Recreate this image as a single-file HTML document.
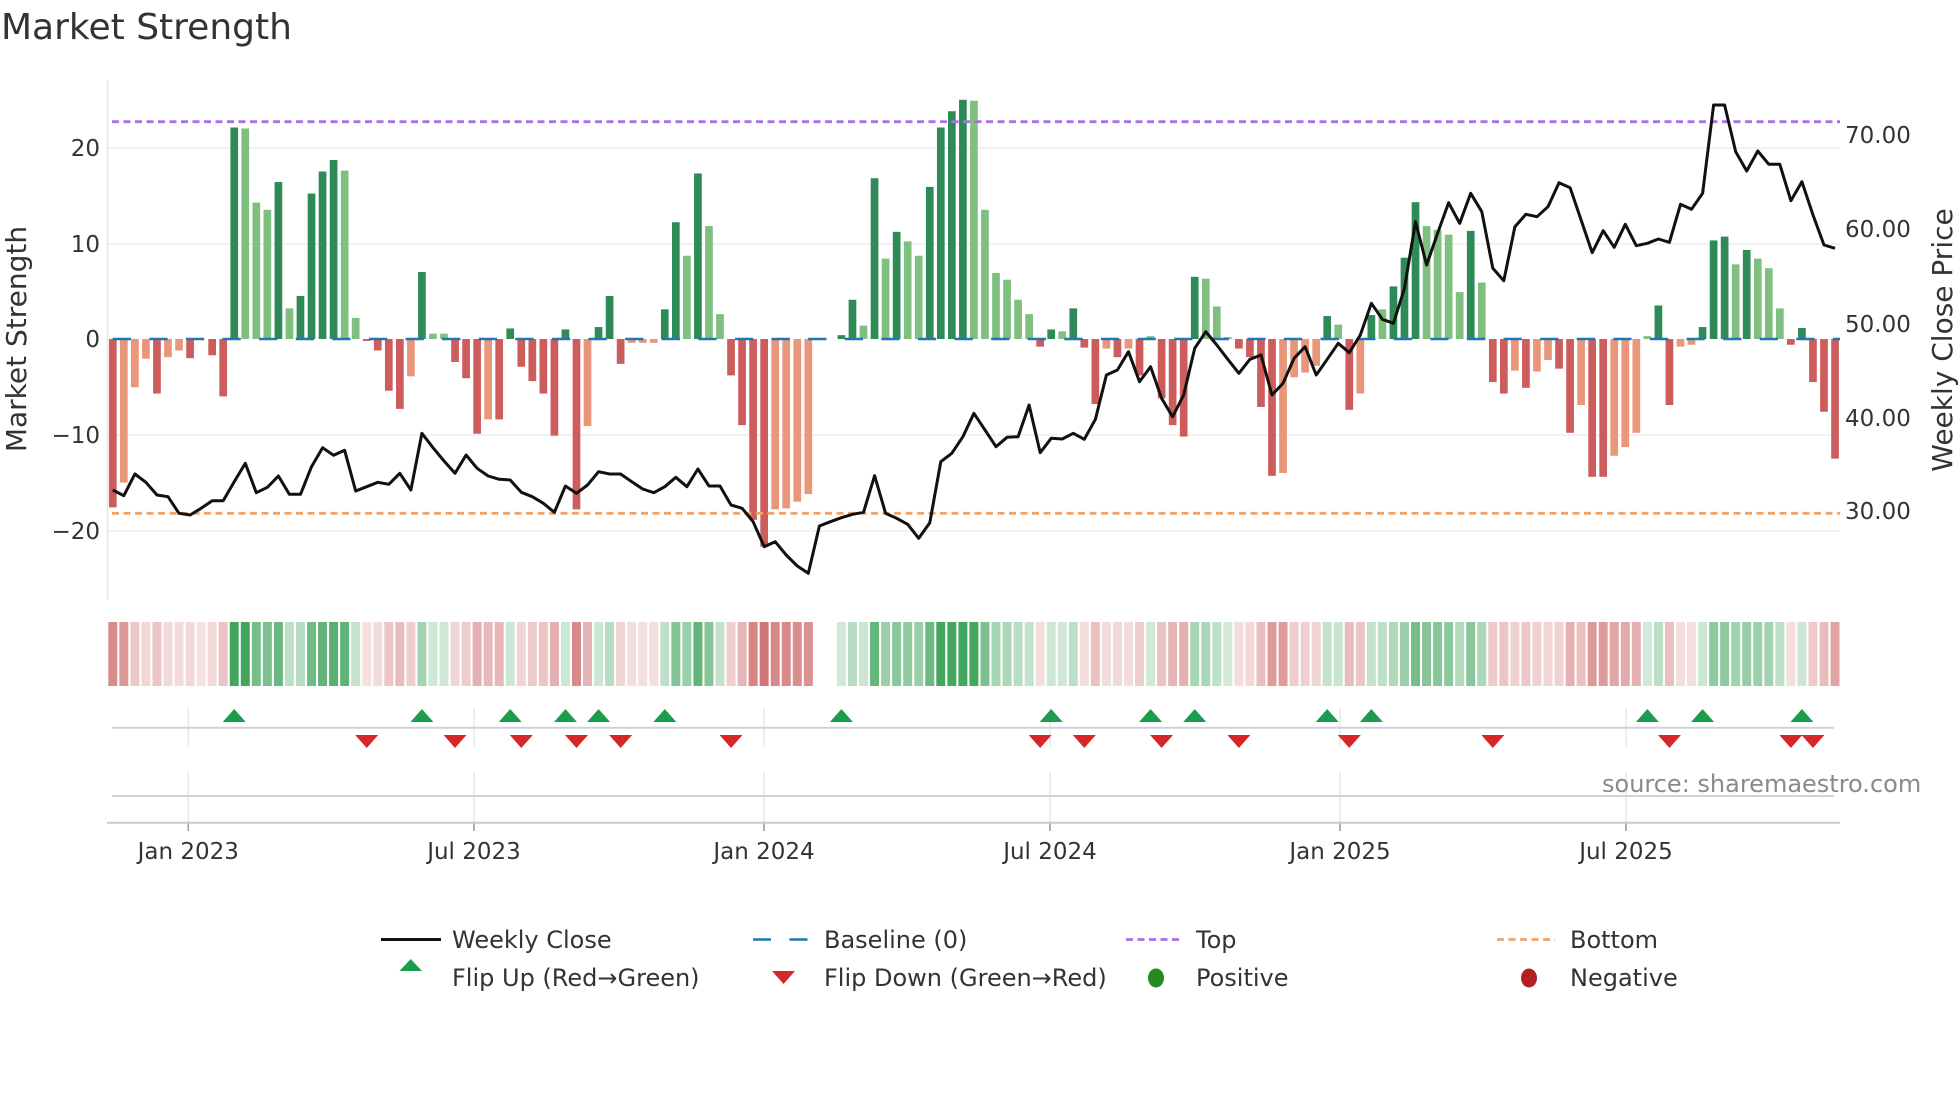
<!DOCTYPE html>
<html><head><meta charset="utf-8">
<style>
html,body{margin:0;padding:0;background:#fff;}
svg{display:block;font-family:"DejaVu Sans","Liberation Sans",sans-serif;}
</style></head>
<body>
<svg id="c" width="1960" height="1102" viewBox="0 0 1960 1102" xmlns="http://www.w3.org/2000/svg">
<rect width="1960" height="1102" fill="#fff"/>
<text x="1" y="39" font-size="36" fill="#333">Market Strength</text>
<g stroke="#eceef2" stroke-width="1.5">
<line x1="107" y1="148" x2="1840" y2="148"/>
<line x1="107" y1="244" x2="1840" y2="244"/>
<line x1="107" y1="435" x2="1840" y2="435"/>
<line x1="107" y1="531" x2="1840" y2="531"/>
</g>
<line x1="107.5" y1="80" x2="107.5" y2="600" stroke="#e6e6ea" stroke-width="1.5"/>
<g font-size="23" fill="#333" text-anchor="end">
<text x="100" y="156">20</text>
<text x="100" y="252">10</text>
<text x="100" y="347">0</text>
<text x="100" y="443">−10</text>
<text x="100" y="539">−20</text>
</g>
<g font-size="23" fill="#333">
<text x="1845" y="143">70.00</text>
<text x="1845" y="237">60.00</text>
<text x="1845" y="332">50.00</text>
<text x="1845" y="426">40.00</text>
<text x="1845" y="519">30.00</text>
</g>
<text transform="translate(26,339) rotate(-90)" font-size="28" fill="#333" text-anchor="middle">Market Strength</text>
<text transform="translate(1952,340) rotate(-90)" font-size="28" fill="#333" text-anchor="middle">Weekly Close Price</text>
<g id="bars"></g>
<line x1="112.7" y1="339" x2="1840" y2="339" stroke="#1f77b4" stroke-width="2.6" stroke-dasharray="18.3 18.3"/>
<line x1="112" y1="121.7" x2="1840" y2="121.7" stroke="#a970e8" stroke-width="2.8" stroke-dasharray="7 4.5"/>
<line x1="112" y1="513.3" x2="1840" y2="513.3" stroke="#f0a46a" stroke-width="2.8" stroke-dasharray="7 4.5"/>
<polyline id="price" fill="none" stroke="#111" stroke-width="3" stroke-linejoin="round"/>
<g id="heat"></g>
<g id="vgrid" stroke="#e5e7eb" stroke-width="1.5"></g>
<line x1="112" y1="727.7" x2="1834" y2="727.7" stroke="#cfd2d8" stroke-width="2"/>
<line x1="112" y1="796" x2="1834" y2="796" stroke="#cfd2d8" stroke-width="2"/>
<line x1="107" y1="822.7" x2="1840" y2="822.7" stroke="#c8c9ce" stroke-width="2"/>
<g id="flips"></g>
<text x="1602" y="792" font-size="24" fill="#8a8a8a">source: sharemaestro.com</text>
<g id="xt" font-size="23" fill="#333" text-anchor="middle"></g>
<g font-size="24" fill="#333">
<line x1="381" y1="939.5" x2="441" y2="939.5" stroke="#111" stroke-width="3"/>
<text x="452" y="948">Weekly Close</text>
<line x1="753" y1="939.5" x2="810" y2="939.5" stroke="#1f77b4" stroke-width="2.6" stroke-dasharray="18 18.5"/>
<text x="824" y="948">Baseline (0)</text>
<line x1="1126" y1="939.5" x2="1182" y2="939.5" stroke="#a970e8" stroke-width="2.8" stroke-dasharray="7 4.5"/>
<text x="1196" y="948">Top</text>
<line x1="1497" y1="939.5" x2="1555" y2="939.5" stroke="#f0a46a" stroke-width="2.8" stroke-dasharray="7 4.5"/>
<text x="1570" y="948">Bottom</text>
<polygon points="399.5,971 422,971 410.7,959" fill="#1b9e4b"/>
<text x="452" y="986">Flip Up (Red→Green)</text>
<polygon points="772,971 795,971 783.5,984" fill="#d62728"/>
<text x="824" y="986">Flip Down (Green→Red)</text>
<ellipse cx="1156" cy="978" rx="8" ry="9.5" fill="#228b22"/>
<text x="1196" y="986">Positive</text>
<ellipse cx="1529" cy="978" rx="8" ry="9.5" fill="#b22222"/>
<text x="1570" y="986">Negative</text>
</g>
</svg>
<script>
(function(){
var NS="http://www.w3.org/2000/svg";
function X(i){return 112.8+11.04*i;}
function el(t,a,p){var e=document.createElementNS(NS,t);for(var k in a)e.setAttribute(k,a[k]);p.appendChild(e);return e;}
var D="-17.6r,-15s,-5.05s,-2.05s,-5.7r,-1.9s,-1.2s,-2r,0n,-1.7r,-6r,22.1d,22l,14.25l,13.5l,16.4d,3.2l,4.5d,15.2d,17.5d,18.7d,17.6l,2.2l,-0.2r,-1.2r,-5.4r,-7.3r,-3.9s,7d,0.56l,0.56l,-2.4r,-4.1r,-9.9r,-8.4s,-8.4r,1.1d,-2.9r,-4.4r,-5.7r,-10.1r,1d,-17.8r,-9.1s,1.25d,4.5d,-2.6r,-0.4s,-0.4s,-0.4s,3.1d,12.2d,8.7l,17.3d,11.8l,2.6l,-3.8r,-9r,-18.9r,-21.7r,-17.8s,-17.7s,-17s,-16.2s,0x,0x,0.4d,4.1d,1.4l,16.8d,8.4l,11.2d,10.2l,8.7l,15.9d,22.1d,23.8d,25d,24.9l,13.5l,6.9l,6.2l,4.1l,2.6l,-0.8r,1d,0.8l,3.2d,-0.9r,-6.8r,-1s,-1.9r,-1s,-3.8r,0.3l,-6.2r,-9r,-10.2r,6.5d,6.3l,3.4l,0.2l,-1r,-1.9r,-7.1r,-14.3r,-14s,-4s,-3.5s,-2.8s,2.4d,1.5l,-7.4r,-5.7s,2.5d,3.1l,5.5d,8.5d,14.3d,11.8l,11.4l,10.9l,4.9l,11.3d,5.9l,-4.5r,-5.7r,-3.3s,-5.1r,-3.4s,-2.2s,-3.1r,-9.8r,-6.9s,-14.4r,-14.4r,-12.2s,-11.3s,-9.8s,0.3l,3.5d,-6.9r,-0.8s,-0.6s,1.25d,10.3d,10.7d,7.8l,9.3d,8.4l,7.4l,3.2l,-0.6r,1.15d,-4.5r,-7.6r,-12.5r".split(",");
var col={d:"#2e8b57",l:"#7fbf7f",r:"#cd5c5c",s:"#e9967a"};
var bars=document.getElementById("bars"),heat=document.getElementById("heat");
for(var i=0;i<D.length;i++){
 var s=D[i],t=s.slice(-1),v=parseFloat(s);
 var x=X(i);
 if(t!="n"&&t!="x"&&v!==0){
  var h=Math.abs(v)*9.57;if(h<1.5)h=1.5;
  el("rect",{x:(x-3.85).toFixed(2),y:(v>0?339-h:339).toFixed(2),width:7.7,height:h.toFixed(2),fill:col[t]},bars);
 }
 if(t=="x")continue;
 var c;
 if(v>0){var tt=0.22+0.72*Math.min(1,Math.abs(v)/22);c=[255-tt*(255-55),255-tt*(255-160),255-tt*(255-85)];}
 else{var tt=0.2+0.72*Math.min(1,Math.abs(v)/22);c=[255-tt*(255-205),255-tt*(255-105),255-tt*(255-105)];}
 el("rect",{x:(x-4.5).toFixed(2),y:622,width:9,height:64,fill:"rgb("+c.map(Math.round).join(",")+")"},heat);
}
var Z=[1230,1247,1182,1207,1245,1250,1300,1305,1285,1262,1262,1205,1150,1238,1222,1188,1243,1243,1160,1103,1126,1111,1233,1220,1207,1213,1180,1230,1060,1103,1143,1180,1125,1165,1188,1198,1200,1237,1250,
1270,1297,1218,1240,1215,1175,1182,1182,1205,1227,1238,1220,1192,1220,1167,1218,1218,1275,1285,1325,1400,1385,1425,1458,1480,1338,1325,1313,1303,1297,1187,1300,1315,1333,1375,1328,1145,1120,1070,1000,
1050,1100,1072,1070,975,1118,1075,1077,1060,1078,1018,885,870,815,905,860,955,1010,945,805,755,795,838,880,838,825,945,910,835,800,885,838,790,818,765,670,718,730,
625,425,555,460,368,430,340,395,565,602,440,403,410,380,308,323,420,518,452,502,433,497,490,477,487,373,388,340,75,75,215,273,213,253,253,362,305,405,495,505];
var pts=[];for(var i=0;i<Z.length;i++)pts.push(X(i).toFixed(1)+","+(80+Z[i]/3).toFixed(1));
document.getElementById("price").setAttribute("points",pts.join(" "));
var fl=document.getElementById("flips");
[11,28,36,41,44,50,66,85,94,98,110,114,139,144,153].forEach(function(i){var x=X(i);el("polygon",{points:(x-11.5)+",722 "+(x+11.5)+",722 "+x+",709",fill:"#1b9e4b"},fl);});
[23,31,37,42,46,56,84,88,95,102,112,125,141,152,154].forEach(function(i){var x=X(i);el("polygon",{points:(x-11.5)+",735 "+(x+11.5)+",735 "+x+",748",fill:"#d62728"},fl);});
var vg=document.getElementById("vgrid"),xt=document.getElementById("xt");
var dates=[[188.3,"Jan 2023"],[474,"Jul 2023"],[764,"Jan 2024"],[1050,"Jul 2024"],[1340,"Jan 2025"],[1626,"Jul 2025"]];
dates.forEach(function(d){
 el("line",{x1:d[0],y1:708,x2:d[0],y2:747},vg);
 el("line",{x1:d[0],y1:772,x2:d[0],y2:822},vg);
 el("line",{x1:d[0],y1:822,x2:d[0],y2:831,stroke:"#999"},vg);
 var t=el("text",{x:d[0],y:859},xt);t.textContent=d[1];
});
})();
</script>
</body></html>
